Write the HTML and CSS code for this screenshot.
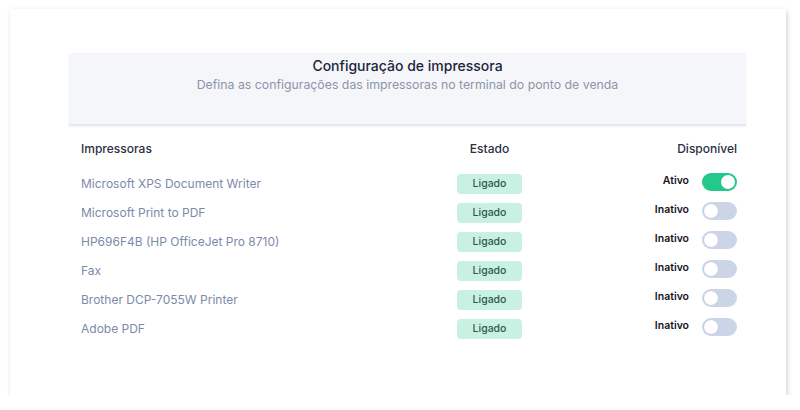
FILE: index.html
```html
<!DOCTYPE html>
<html lang="pt">
<head>
<meta charset="utf-8">
<link rel="stylesheet" href="styles.css">
</head>
<body>
<div class="card">
  <div class="head">
    <div class="title">Configuração de impressora</div>
    <div class="subtitle">Defina as configurações das impressoras no terminal do ponto de venda</div>
  </div>
  <div class="table">
    <div class="row th">
      <div class="c-name">Impressoras</div>
      <div class="c-state">Estado</div>
      <div class="c-avail">Disponível</div>
    </div>
    <div class="row">
      <div class="c-name">Microsoft XPS Document Writer</div>
      <div class="c-state"><span class="badge">Ligado</span></div>
      <div class="c-avail"><span class="lbl">Ativo</span><span class="switch on"><span class="knob"></span></span></div>
    </div>
    <div class="row">
      <div class="c-name">Microsoft Print to PDF</div>
      <div class="c-state"><span class="badge">Ligado</span></div>
      <div class="c-avail"><span class="lbl">Inativo</span><span class="switch"><span class="knob"></span></span></div>
    </div>
    <div class="row">
      <div class="c-name">HP696F4B (HP OfficeJet Pro 8710)</div>
      <div class="c-state"><span class="badge">Ligado</span></div>
      <div class="c-avail"><span class="lbl">Inativo</span><span class="switch"><span class="knob"></span></span></div>
    </div>
    <div class="row">
      <div class="c-name">Fax</div>
      <div class="c-state"><span class="badge">Ligado</span></div>
      <div class="c-avail"><span class="lbl">Inativo</span><span class="switch"><span class="knob"></span></span></div>
    </div>
    <div class="row">
      <div class="c-name">Brother DCP-7055W Printer</div>
      <div class="c-state"><span class="badge">Ligado</span></div>
      <div class="c-avail"><span class="lbl">Inativo</span><span class="switch"><span class="knob"></span></span></div>
    </div>
    <div class="row">
      <div class="c-name">Adobe PDF</div>
      <div class="c-state"><span class="badge">Ligado</span></div>
      <div class="c-avail"><span class="lbl">Inativo</span><span class="switch"><span class="knob"></span></span></div>
    </div>
  </div>
</div>
</body>
</html>
```
FILE: styles.css
```css
html, body {
  margin: 0;
  padding: 0;
  background: #ffffff;
}
body {
  font-family: Inter, "Open Sans", sans-serif;
  padding: 9px 0 0 10px;
}
.card {
  box-sizing: border-box;
  width: 776px;
  height: 386px;
  background: #fff;
  box-shadow: 2px 3px 5px rgba(40, 50, 90, 0.16), 0 0 4px rgba(40, 50, 90, 0.06);
  padding: 44px 40px 0 59px;
}
.head {
  box-sizing: border-box;
  height: 73px;
  background: #f5f6f9;
  border-bottom: 2px solid #e4e7ee;
  box-shadow: 0 1px 2px rgba(40, 50, 80, 0.06);
  text-align: center;
  padding-top: 3px;
}
.title {
  font-size: 14px;
  font-weight: 500;
  color: #20263a;
  line-height: 20px;
}
.subtitle {
  font-size: 12.3px;
  color: #8b95ab;
  line-height: 18px;
}
.table {
  padding: 8px 9px 0 12px;
}
.row {
  display: grid;
  grid-template-columns: 376px 65px 1fr;
  height: 29px;
  align-items: center;
}
.row.th {
  margin-bottom: 6px;
  font-size: 12px;
  font-weight: 500;
  color: #2a3042;
}
.c-name {
  font-size: 12px;
  color: #7c8aaa;
}
.th .c-name { color: #2a3042; }
.c-state {
  text-align: center;
}
.c-avail {
  display: flex;
  justify-content: flex-end;
  align-items: center;
  gap: 13px;
}
.badge {
  display: flex;
  align-items: center;
  justify-content: center;
  height: 20px;
  width: 65px;
  border-radius: 4px;
  background: #c8f1e3;
  color: #2e5a4b;
  font-size: 10.5px;
  font-weight: 500;
}
.lbl {
  font-size: 10.5px;
  font-weight: 600;
  color: #15161c;
  padding-bottom: 6px;
}
.switch {
  box-sizing: border-box;
  width: 35px;
  height: 18px;
  border-radius: 9px;
  background: #ccd5e8;
  display: flex;
  align-items: center;
  padding: 0 2px;
  margin-bottom: 4px;
}
.switch .knob {
  width: 14px;
  height: 14px;
  border-radius: 50%;
  background: #fff;
  box-shadow: 0 0 1px rgba(0, 0, 0, 0.15);
}
.switch.on {
  background: #22c98b;
  justify-content: flex-end;
}
```
